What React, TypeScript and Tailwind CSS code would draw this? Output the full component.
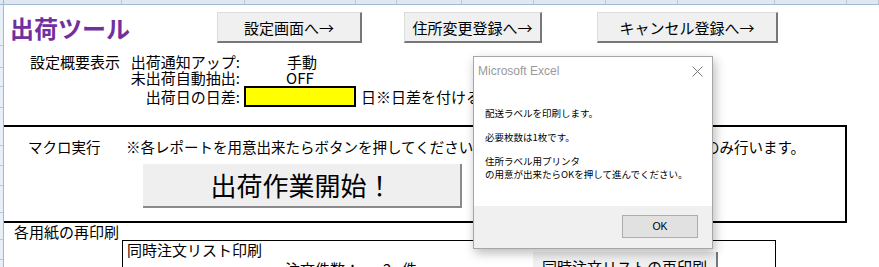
import React from 'react';

const colWidths = [118, 123, 111, 41, 65, 72, 72, 72, 97, 72, 32];
const rowHeights = [41, 22, 19, 21, 38, 20, 20, 27, 27, 20];

const SheetButton: React.FC<{ label: string; className: string }> = ({ label, className }) => (
  <div
    className={
      'flex items-center justify-center bg-[#f0f0f0] border-t border-l border-t-[#dcdcdc] border-l-[#dcdcdc] border-r-2 border-b-2 border-r-[#777] border-b-[#777] text-[15px] leading-none text-black ' +
      className
    }
  >
    {label}
  </div>
);

const MessageBox: React.FC = () => (
  <div className="absolute left-[473px] top-[56px] w-[240px] h-[193px] bg-white border border-[#a6a6a6] shadow-[2px_4px_10px_rgba(0,0,0,0.28)] flex flex-col">
    <div className="h-[28px] flex items-center justify-between pl-[4px] pr-[9px]">
      <span className="text-[12px] text-[#9a9a9a] font-['Liberation_Sans',sans-serif]">Microsoft Excel</span>
      <svg width="11" height="11" viewBox="0 0 11 11">
        <path d="M0.5 0.5 L10.5 10.5 M10.5 0.5 L0.5 10.5" stroke="#7a7a7a" strokeWidth="1" fill="none" />
      </svg>
    </div>
    <div className="flex-1 pl-[11px] pt-[22px] text-[9.5px] leading-[13px] text-black">
      <p>配送ラベルを印刷します。</p>
      <p className="mt-[11px]">必要枚数は1枚です。</p>
      <p className="mt-[11px]">住所ラベル用プリンタ</p>
      <p>の用意が出来たらOKを押して進んでください。</p>
    </div>
    <div className="h-[42px] bg-[#f0f0f0] flex justify-end items-start pt-[9px] pr-[14px]">
      <div className="w-[76px] h-[23px] bg-[#e1e1e1] border border-[#adadad] flex items-center justify-center text-[10.5px] text-black font-['Liberation_Sans',sans-serif]">
        OK
      </div>
    </div>
  </div>
);

const App: React.FC = () => {
  return (
    <div className="relative w-[879px] h-[267px] overflow-hidden bg-white text-black font-['Noto_Sans_CJK_JP','Noto_Sans',sans-serif]">
      {/* column header */}
      <div className="flex h-[5px] bg-[#dfe7f2] border-b border-[#a3b8d3]">
        <div className="w-[4px] border-r border-[#a3b8d3]" />
        {colWidths.map((w, i) => (
          <div key={i} className="border-r border-[#b8c9de]" style={{ width: w }} />
        ))}
      </div>

      <div className="flex">
        {/* row header */}
        <div className="w-[4px] h-[262px] bg-[#e9eff7] border-r border-[#a3b8d3] flex flex-col">
          {rowHeights.map((h, i) => (
            <div key={i} className="border-b border-[#b8c9de]" style={{ height: h }} />
          ))}
        </div>

        <div className="flex-1 flex flex-col">
          {/* top row: title + navigation buttons */}
          <div className="flex items-start pt-[7px] pl-[6px]">
            <div className="w-[207px] mt-[4px] text-[24px] leading-[24px] font-bold text-[#7030a0]">出荷ツール</div>
            <SheetButton label="設定画面へ→" className="w-[145px] h-[31px]" />
            <SheetButton label="住所変更登録へ→" className="ml-[42px] w-[138px] h-[31px]" />
            <SheetButton label="キャンセル登録へ→" className="ml-[55px] w-[181px] h-[31px]" />
          </div>

          {/* settings summary */}
          <div className="mt-[10px] text-[15px]">
            <div className="flex items-center h-[16px] leading-[15px]">
              <span className="ml-[26px] w-[100px]">設定概要表示</span>
              <span className="w-[110px] text-right">出荷通知アップ:</span>
              <span className="ml-[47px]">手動</span>
            </div>
            <div className="flex items-center h-[17px] leading-[15px]">
              <span className="ml-[126px] w-[110px] text-right">未出荷自動抽出:</span>
              <span className="ml-[46px]">OFF</span>
            </div>
            <div className="flex items-center h-[21px] leading-[15px]">
              <span className="ml-[126px] w-[110px] text-right">出荷日の日差:</span>
              <div className="ml-[4px] w-[112px] h-[21px] bg-[#ffff00] border-2 border-black" />
              <span className="ml-[5px]">日※日差を付ける</span>
            </div>
          </div>

          {/* macro section */}
          <div className="mt-[18px] w-[843px] h-[98px] border-t-2 border-b-2 border-r-2 border-black flex flex-col">
            <div className="flex items-center h-[17px] mt-[11px] text-[14.5px] leading-[17px] pr-[40px]">
              <span className="ml-[24px] w-[98px]">マクロ実行</span>
              <span>※各レポートを用意出来たらボタンを押してください。</span>
              <span className="ml-auto">のみ行います。</span>
            </div>
            <div className="ml-[139px] mt-[9px] w-[319px] h-[44px] bg-[#efefef] border-b-2 border-r-2 border-[#8a8a8a] flex items-center justify-center text-[26px] leading-none">
              出荷作業開始！
            </div>
          </div>

          {/* reprint section */}
          <div className="h-[17px] flex items-center pl-[10px] text-[15px] leading-[17px]">各用紙の再印刷</div>
          <div className="ml-[118px] w-[654px] h-[40px] border-t border-l border-r border-black flex">
            <div className="w-[410px] flex flex-col">
              <div className="h-[18px] flex items-center pl-[4px] text-[15px] leading-[18px]">同時注文リスト印刷</div>
              <div className="h-[20px] flex items-center text-[15px] leading-[20px]">
                <span className="ml-[162px] w-[98px]">注文件数：</span>
                <span className="w-[19px]">2</span>
                <span>件</span>
              </div>
            </div>
            <SheetButton label="同時注文リストの再印刷" className="mt-[11px] w-[185px] h-[30px] border-t-0 border-l-0" />
          </div>
        </div>
      </div>

      <MessageBox />
    </div>
  );
};

export default App;
